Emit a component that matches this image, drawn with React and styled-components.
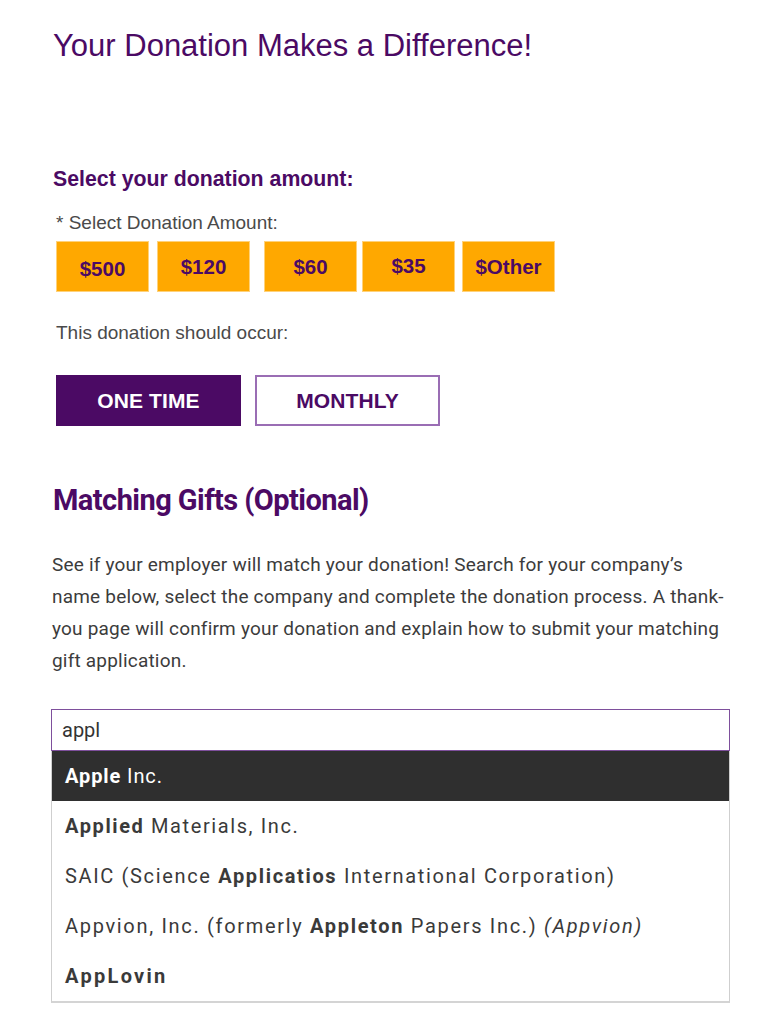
import React from "react";
import styled, { createGlobalStyle } from "styled-components";

const Global = createGlobalStyle`
  html, body { margin: 0; padding: 0; background: #fff; }
  body { font-family: "Liberation Sans", Arial, sans-serif; }
  * { box-sizing: border-box; }
`;

const PURPLE = "#4b0a64";

const Page = styled.div`
  width: 768px;
  padding: 28px 0 0 53px;
`;

const Title = styled.h1`
  margin: 0;
  font-family: "Liberation Sans", Arial, sans-serif;
  font-weight: 400;
  font-size: 31px;
  line-height: 36px;
  color: ${PURPLE};
`;

const SectionLabel = styled.h2`
  margin: 102px 0 0 0;
  font-size: 21.3px;
  line-height: 26px;
  font-weight: 700;
  color: ${PURPLE};
`;

const FieldLabel = styled.div`
  margin: ${(p) => p.$top}px 0 0 3px;
  font-size: 19px;
  line-height: 24px;
  color: #4a4a4a;
`;

const AmountRow = styled.div`
  display: flex;
  margin: 6px 0 0 3px;
`;

const AmountButton = styled.button`
  width: 93px;
  height: 51px;
  margin-right: ${(p) => p.$gap}px;
  background: #ffa800;
  border: 1px solid #ffd27a;
  color: ${PURPLE};
  font-family: "Liberation Sans", Arial, sans-serif;
  font-weight: 700;
  font-size: 20.5px;
  padding: 0;
  cursor: pointer;
  span {
    display: inline-block;
    transform: translateY(${(p) => p.$shift}px);
  }
`;

const FreqRow = styled.div`
  display: flex;
  gap: 14px;
  margin: 30px 0 0 3px;
`;

const FreqButton = styled.button`
  width: 185px;
  height: 51px;
  background: ${(p) => (p.$active ? PURPLE : "#fff")};
  color: ${(p) => (p.$active ? "#fff" : PURPLE)};
  border: ${(p) => (p.$active ? `1px solid ${PURPLE}` : "2px solid #9a6db4")};
  font-family: "Liberation Sans", Arial, sans-serif;
  font-weight: 700;
  font-size: 21px;
  letter-spacing: 0.1px;
  cursor: pointer;
`;

const MatchTitle = styled.h2`
  margin: 57px 0 0 0;
  font-family: Roboto, "Liberation Sans", sans-serif;
  font-weight: 700;
  font-size: 29px;
  line-height: 34px;
  color: ${PURPLE};
  letter-spacing: -0.55px;
`;

const Para = styled.p`
  margin: 32px 0 0 -1px;
  width: 700px;
  font-family: Roboto, "Liberation Sans", sans-serif;
  font-size: 19px;
  line-height: 32px;
  color: #3c3c3c;
  letter-spacing: 0.2px;
`;

const Combo = styled.div`
  margin: 32px 0 0 -2px;
  width: 679px;
`;

const Input = styled.div`
  height: 42px;
  border: 1px solid #7e4f9c;
  padding: 0 10px;
  display: flex;
  align-items: center;
  font-family: Roboto, "Liberation Sans", sans-serif;
  font-size: 20px;
  color: #333;
`;

const List = styled.ul`
  list-style: none;
  margin: 0;
  padding: 0;
  border: 1px solid #cfcfcf;
  border-top: none;
  border-bottom: 2px solid #d4d4d4;
`;

const Item = styled.li`
  height: 50px;
  display: flex;
  align-items: center;
  padding: 0 13px;
  font-family: Roboto, "Liberation Sans", sans-serif;
  font-size: 20px;
  letter-spacing: ${(p) => p.$ls}px;
  background: ${(p) => (p.$active ? "#2f2f2f" : "#fff")};
  color: ${(p) => (p.$active ? "#fff" : "#3a3a3a")};
  white-space: pre;
  b { font-weight: 700; }
  i { font-style: italic; }
`;

const amounts = [
  { v: "$500", gap: 8, shift: 2 },
  { v: "$120", gap: 14, shift: 0 },
  { v: "$60", gap: 5, shift: 0 },
  { v: "$35", gap: 7, shift: -1 },
  { v: "$Other", gap: 0, shift: 0 },
];

export default function App() {
  return (
    <>
      <Global />
      <Page>
        <Title>Your Donation Makes a Difference!</Title>
        <SectionLabel>Select your donation amount:</SectionLabel>
        <FieldLabel $top={19}>* Select Donation Amount:</FieldLabel>
        <AmountRow>
          {amounts.map((a) => (
            <AmountButton key={a.v} $gap={a.gap} $shift={a.shift}>
              <span>{a.v}</span>
            </AmountButton>
          ))}
        </AmountRow>
        <FieldLabel $top={29}>This donation should occur:</FieldLabel>
        <FreqRow>
          <FreqButton $active>ONE TIME</FreqButton>
          <FreqButton>MONTHLY</FreqButton>
        </FreqRow>
        <MatchTitle>Matching Gifts (Optional)</MatchTitle>
        <Para>
          See if your employer will match your donation! Search for your company’s
          <br />
          name below, select the company and complete the donation process. A thank-
          <br />
          you page will confirm your donation and explain how to submit your matching
          <br />
          gift application.
        </Para>
        <Combo>
          <Input>appl</Input>
          <List>
            <Item $active $ls={0.9}>
              <b>Apple</b> Inc.
            </Item>
            <Item $ls={1.6}>
              <b>Applied</b> Materials, Inc.
            </Item>
            <Item $ls={1.65}>
              SAIC (Science <b>Applicatios</b> International Corporation)
            </Item>
            <Item $ls={1.68}>
              Appvion, Inc. (formerly <b>Appleton</b> Papers Inc.) <i>(Appvion)</i>
            </Item>
            <Item $ls={2.3}>
              <b>AppLovin</b>
            </Item>
          </List>
        </Combo>
      </Page>
    </>
  );
}
